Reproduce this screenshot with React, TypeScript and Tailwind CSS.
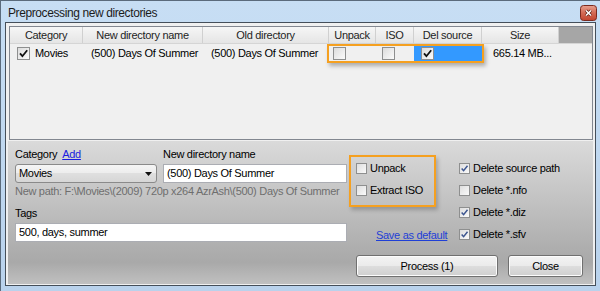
function Tick({ color }: { color: string }) {
  return (
    <svg viewBox="0 0 11 11" className="absolute inset-0 h-full w-full">
      <path d="M2 5.4 L4.4 8.2 L9.2 2.2" fill="none" stroke={color} strokeWidth="1.8" />
    </svg>
  )
}

// checkbox drawn inside the list rows (classic black tick)
function ListBox({ checked }: { checked?: boolean }) {
  return (
    <span className="relative block size-[13px] shrink-0 border border-[#8e8f8f] bg-[linear-gradient(135deg,#dcdcdc,#fbfbfb)]">
      {checked && <Tick color="#111" />}
    </span>
  )
}

// checkbox in the options panel (blue-grey tick)
function PanelBox({ checked }: { checked?: boolean }) {
  return (
    <span className="relative block size-[11px] shrink-0 border border-[#8e8f8f] bg-[linear-gradient(135deg,#dedede,#fafafa)]">
      {checked && <Tick color="#3d5690" />}
    </span>
  )
}

function Option({ label, checked }: { label: string; checked?: boolean }) {
  return (
    <div className="flex h-[22px] items-center gap-[3px] whitespace-nowrap">
      <PanelBox checked={checked} />
      <span>{label}</span>
    </div>
  )
}

const btn =
  'flex h-[22px] items-center justify-center rounded-[3px] border border-[#707070] bg-[linear-gradient(180deg,#f3f3f3_0%,#ebebeb_48%,#dddddd_52%,#cfcfcf_100%)] shadow-[inset_0_0_0_1px_#fcfcfc]'

export default function App() {
  return (
    <div className="flex h-[291px] w-[600px] flex-col border-l border-t border-[#5b6b7c] bg-[linear-gradient(180deg,#c7def4,#b9d2ec)] font-['Liberation_Sans',Arial,sans-serif] text-[11px] tracking-[-0.3px] text-black">
      {/* title bar */}
      <div className="flex h-[21px] items-center pl-[7px] pr-[3px] pt-[3px]">
        <span className="text-[12px] tracking-[-0.4px] text-[#1b1b1b]">Preprocessing new directories</span>
        <span className="ml-auto block h-[16px] w-[17px]">
          <svg width="17" height="16" viewBox="0 0 17 16">
            <defs>
              <linearGradient id="cls" x1="0" y1="0" x2="0" y2="1">
                <stop offset="0" stopColor="#e7a08f" />
                <stop offset="0.5" stopColor="#d36a54" />
                <stop offset="1" stopColor="#c2442e" />
              </linearGradient>
            </defs>
            <rect x="0.5" y="0.5" width="16" height="15" rx="3" fill="url(#cls)" stroke="#7a2a1e" />
            <path d="M6 5.5 L11 10.5 M11 5.5 L6 10.5" stroke="#5a1a10" strokeWidth="3" />
            <path d="M6 5.5 L11 10.5 M11 5.5 L6 10.5" stroke="#fff" strokeWidth="1.6" />
          </svg>
        </span>
      </div>

      {/* client area */}
      <div className="mx-[4px] mb-[5px] flex flex-1 flex-col border border-[#454f5a] bg-[#f0f0f0]">
        {/* list view */}
        <div className="ml-[3px] mr-[2px] mt-[3px] flex h-[114px] flex-col border border-[#828790] bg-[#f0f0f0]">
          <div className="flex h-[17px] border-b border-[#d5d5d5] bg-[linear-gradient(180deg,#f6f6f6,#e5e5e5)] text-[#1e1e1e]">
            <div className="flex w-[73px] items-center justify-center border-r border-[#d0d0d0]">Category</div>
            <div className="flex w-[120px] items-center justify-center border-r border-[#d0d0d0]">New directory name</div>
            <div className="flex w-[126px] items-center justify-center border-r border-[#d0d0d0]">Old directory</div>
            <div className="flex w-[47px] items-center justify-center border-r border-[#d0d0d0]">Unpack</div>
            <div className="flex w-[38px] items-center justify-center border-r border-[#d0d0d0]">ISO</div>
            <div className="flex w-[68px] items-center justify-center border-r border-[#d0d0d0]">Del source</div>
            <div className="flex w-[77px] items-center justify-center border-r border-[#d0d0d0]">Size</div>
            <div className="flex-1 bg-[#a6a6a6]" />
          </div>
          <div className="relative flex h-[18px] items-center whitespace-nowrap">
            <div className="flex w-[73px] items-center gap-[5px] pl-[7px]">
              <ListBox checked />
              <span>Movies</span>
            </div>
            <div className="w-[120px] pl-[8px]">(500) Days Of Summer</div>
            <div className="w-[126px] overflow-hidden pl-[8px]">(500) Days Of Summer</div>
            <div className="w-[47px] pl-[4px]">
              <ListBox />
            </div>
            <div className="w-[38px] pl-[6px]">
              <ListBox />
            </div>
            <div className="flex h-[16px] w-[68px] items-center bg-[#3399ff] pl-[7px]">
              <ListBox checked />
            </div>
            <div className="w-[77px] pl-[11px]">665.14 MB...</div>
            {/* annotation */}
            <div className="absolute left-[317px] top-0 h-[19px] w-[157px] border-2 border-[#f5a020] shadow-[2px_3px_4px_rgba(0,0,0,0.28)]" />
          </div>
        </div>

        {/* options panel */}
        <div className="mx-[2px] mt-[1px] flex h-[143px] flex-col bg-[linear-gradient(180deg,#dadada_0%,#c6c6c6_35%,#aeaeae_75%,#a9a9a9_85%,#c0c0c0_100%)] pl-[7px] pr-[10px] pt-[7px]">
          <div className="flex h-[107px] items-start">
            <div className="flex w-[332px] flex-col">
              <div className="flex gap-[6px]">
                <div className="flex w-[142px] flex-col">
                  <div className="flex h-[13px] items-center leading-[13px]">
                    <span>Category</span>
                    <span className="ml-[5px] text-[#1a1ae0] underline">Add</span>
                  </div>
                  <div className="mt-[3px] flex h-[19px] items-center justify-between rounded-[3px] border border-[#8a8a8a] bg-[linear-gradient(180deg,#f5f5f5_0%,#ececec_50%,#dfdfdf_50%,#d6d6d6_100%)] pl-[3px] pr-[4px]">
                    <span>Movies</span>
                    <svg width="7" height="4" viewBox="0 0 7 4">
                      <path d="M0 0H7L3.5 4Z" fill="#111" />
                    </svg>
                  </div>
                </div>
                <div className="flex w-[184px] flex-col">
                  <div className="h-[13px] leading-[13px]">New directory name</div>
                  <div className="mt-[3px] flex h-[19px] items-center border border-[#abadb3] bg-white pl-[3px]">(500) Days Of Summer</div>
                </div>
              </div>
              <div className="mt-[2px] h-[13px] whitespace-nowrap leading-[13px] text-[#6e6e6e]">
                New path: F:\Movies\(2009) 720p x264 AzrAsh\(500) Days Of Summer
              </div>
              <div className="mt-[9px] h-[13px] leading-[13px]">Tags</div>
              <div className="mt-[3px] flex h-[19px] items-center border border-[#abadb3] bg-white pl-[3px]">500, days, summer</div>
            </div>

            <div className="ml-[2px] flex w-[110px] flex-col">
              <div className="mt-[7px] flex h-[52px] w-[87px] flex-col border-2 border-[#f5a020] pl-[5px] shadow-[2px_3px_4px_rgba(0,0,0,0.22)]">
                <Option label="Unpack" />
                <Option label="Extract ISO" />
              </div>
              <span className="ml-[27px] mt-[22px] whitespace-nowrap leading-[13px] text-[#1f3fd6] underline">Save as default</span>
            </div>

            <div className="flex flex-col pt-[9px]">
              <Option label="Delete source path" checked />
              <Option label="Delete *.nfo" />
              <Option label="Delete *.diz" checked />
              <Option label="Delete *.sfv" checked />
            </div>
          </div>

          <div className="flex justify-end gap-[10px]">
            <button className={`${btn} w-[142px]`}>Process (1)</button>
            <button className={`${btn} w-[75px]`}>Close</button>
          </div>
        </div>
      </div>
    </div>
  )
}
